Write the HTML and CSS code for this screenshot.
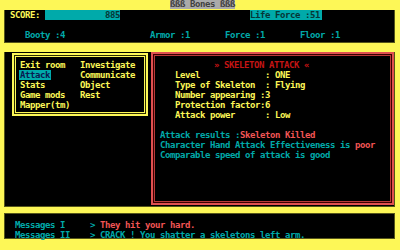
FILE: index.html
```html
<!DOCTYPE html>
<html>
<head>
<meta charset="utf-8">
<link rel="stylesheet" href="styles.css">
</head>
<body>
<div class="screen">
  <div class="titlebar"><span class="title">ßßß Bones ßßß</span></div>

  <div class="panel top">
    <div class="row">
      <span class="score-label">SCORE:</span>
      <span class="bar score-bar">885</span>
      <span class="bar life-bar">Life Force :51</span>
    </div>
    <div class="row stats-row">
      <span class="stat booty">Booty :4</span>
      <span class="stat">Armor :1</span>
      <span class="stat">Force :1</span>
      <span class="stat">Floor :1</span>
    </div>
  </div>

  <div class="panel middle">
    <div class="menu">
      <span>Exit room</span><span>Investigate</span>
      <span><span class="sel">Attack</span></span><span>Communicate</span>
      <span>Stats</span><span>Object</span>
      <span>Game mods</span><span>Rest</span>
      <span>Mapper(tm)</span><span></span>
    </div>
    <div class="attack">
      <div class="attack-title">» SKELETON ATTACK «</div>
      <div class="facts">
        <span>Level</span><span> : ONE</span>
        <span>Type of Skeleton</span><span> : Flying</span>
        <span>Number appearing</span><span>:3</span>
        <span>Protection factor</span><span>:6</span>
        <span>Attack power</span><span> : Low</span>
      </div>
      <div class="results">
        <div class="line">Attack results :<span class="hot">Skeleton Killed</span></div>
        <div class="line">Character Hand Attack Effectiveness is <span class="hot">poor</span></div>
        <div class="line">Comparable speed of attack is good</div>
      </div>
    </div>
  </div>

  <div class="panel msgs">
    <div class="msg"><span class="msg-label">Messages I</span><span>&gt; </span><span class="hot">They hit your hard.</span></div>
    <div class="msg"><span class="msg-label">Messages II</span><span>&gt; CRACK ! You shatter a skeletons left arm.</span></div>
  </div>
</div>
</body>
</html>
```

FILE: styles.css
```css
html, body {
  margin: 0;
  padding: 0;
  background: #fdf757;
}

.screen {
  width: 400px;
  height: 250px;
  overflow: hidden;
  background: #fdf757;
  font-family: "DejaVu Sans Mono", "Liberation Mono", monospace;
  font-weight: bold;
  font-size: 9px;
  letter-spacing: -0.418px;
  line-height: 10px;
}

.screen span,
.line,
.attack-title {
  white-space: pre;
}

.line {
  height: 10px;
}

.titlebar {
  height: 10px;
  display: flex;
}

.title {
  margin-left: 170px;
  width: 65px;
  background: #aaaaaa;
  color: #404040;
  height: 9px;
  line-height: 9px;
}

.panel {
  background: #000;
  border: 1px solid #55551a;
  border-top: none;
  margin-left: 4px;
  width: 391px;
  box-sizing: border-box;
}

.top {
  height: 33px;
}

.row {
  display: flex;
  height: 10px;
}

.score-label {
  margin-left: 5px;
  width: 35px;
  color: #fdf757;
}

.bar {
  background: #00aaaa;
  color: #063636;
}

.score-bar {
  width: 75px;
  text-align: right;
}

.life-bar {
  margin-left: 130px;
  width: 72px;
}

.stats-row {
  margin-top: 10px;
  color: #00aaaa;
}

.stat {
  width: 75px;
}

.stat.booty {
  margin-left: 20px;
  width: 125px;
}

.middle {
  margin-top: 9px;
  height: 155px;
  display: flex;
  align-items: flex-start;
}

.menu {
  margin-left: 7px;
  margin-top: 1px;
  width: 136px;
  height: 63px;
  box-sizing: border-box;
  border: 2px solid #fdf757;
  box-shadow: inset 0 0 0 1px #2a2a00, inset 0 0 0 2px #fdf757;
  padding: 5px 0 0 6px;
  display: grid;
  grid-template-columns: 60px auto;
  grid-auto-rows: 10px;
  color: #fdf757;
}

.sel {
  background: #00aaaa;
  color: #0a1a50;
  margin-left: -1px;
  padding-left: 1px;
  padding-right: 1px;
}

.attack {
  margin-left: 3px;
  width: 243px;
  height: 153px;
  box-sizing: border-box;
  border: 2px solid #e05050;
  box-shadow: inset 0 0 0 1px #3a0000, inset 0 0 0 2px #b83838;
  padding: 6px 0 0 7px;
}

.attack-title {
  margin-left: 54px;
  height: 10px;
  color: #c41414;
}

.facts {
  margin-left: 15px;
  display: grid;
  grid-template-columns: 85px auto;
  grid-auto-rows: 10px;
  color: #fdf757;
}

.results {
  margin-top: 10px;
  color: #00aaaa;
}

.hot {
  color: #f25555;
}

.msgs {
  margin-top: 6px;
  height: 26px;
  border-top: 1px solid #55551a;
  padding: 6px 0 0 10px;
  color: #00aaaa;
}

.msg {
  display: flex;
  height: 10px;
}

.msg-label {
  width: 75px;
}
```
